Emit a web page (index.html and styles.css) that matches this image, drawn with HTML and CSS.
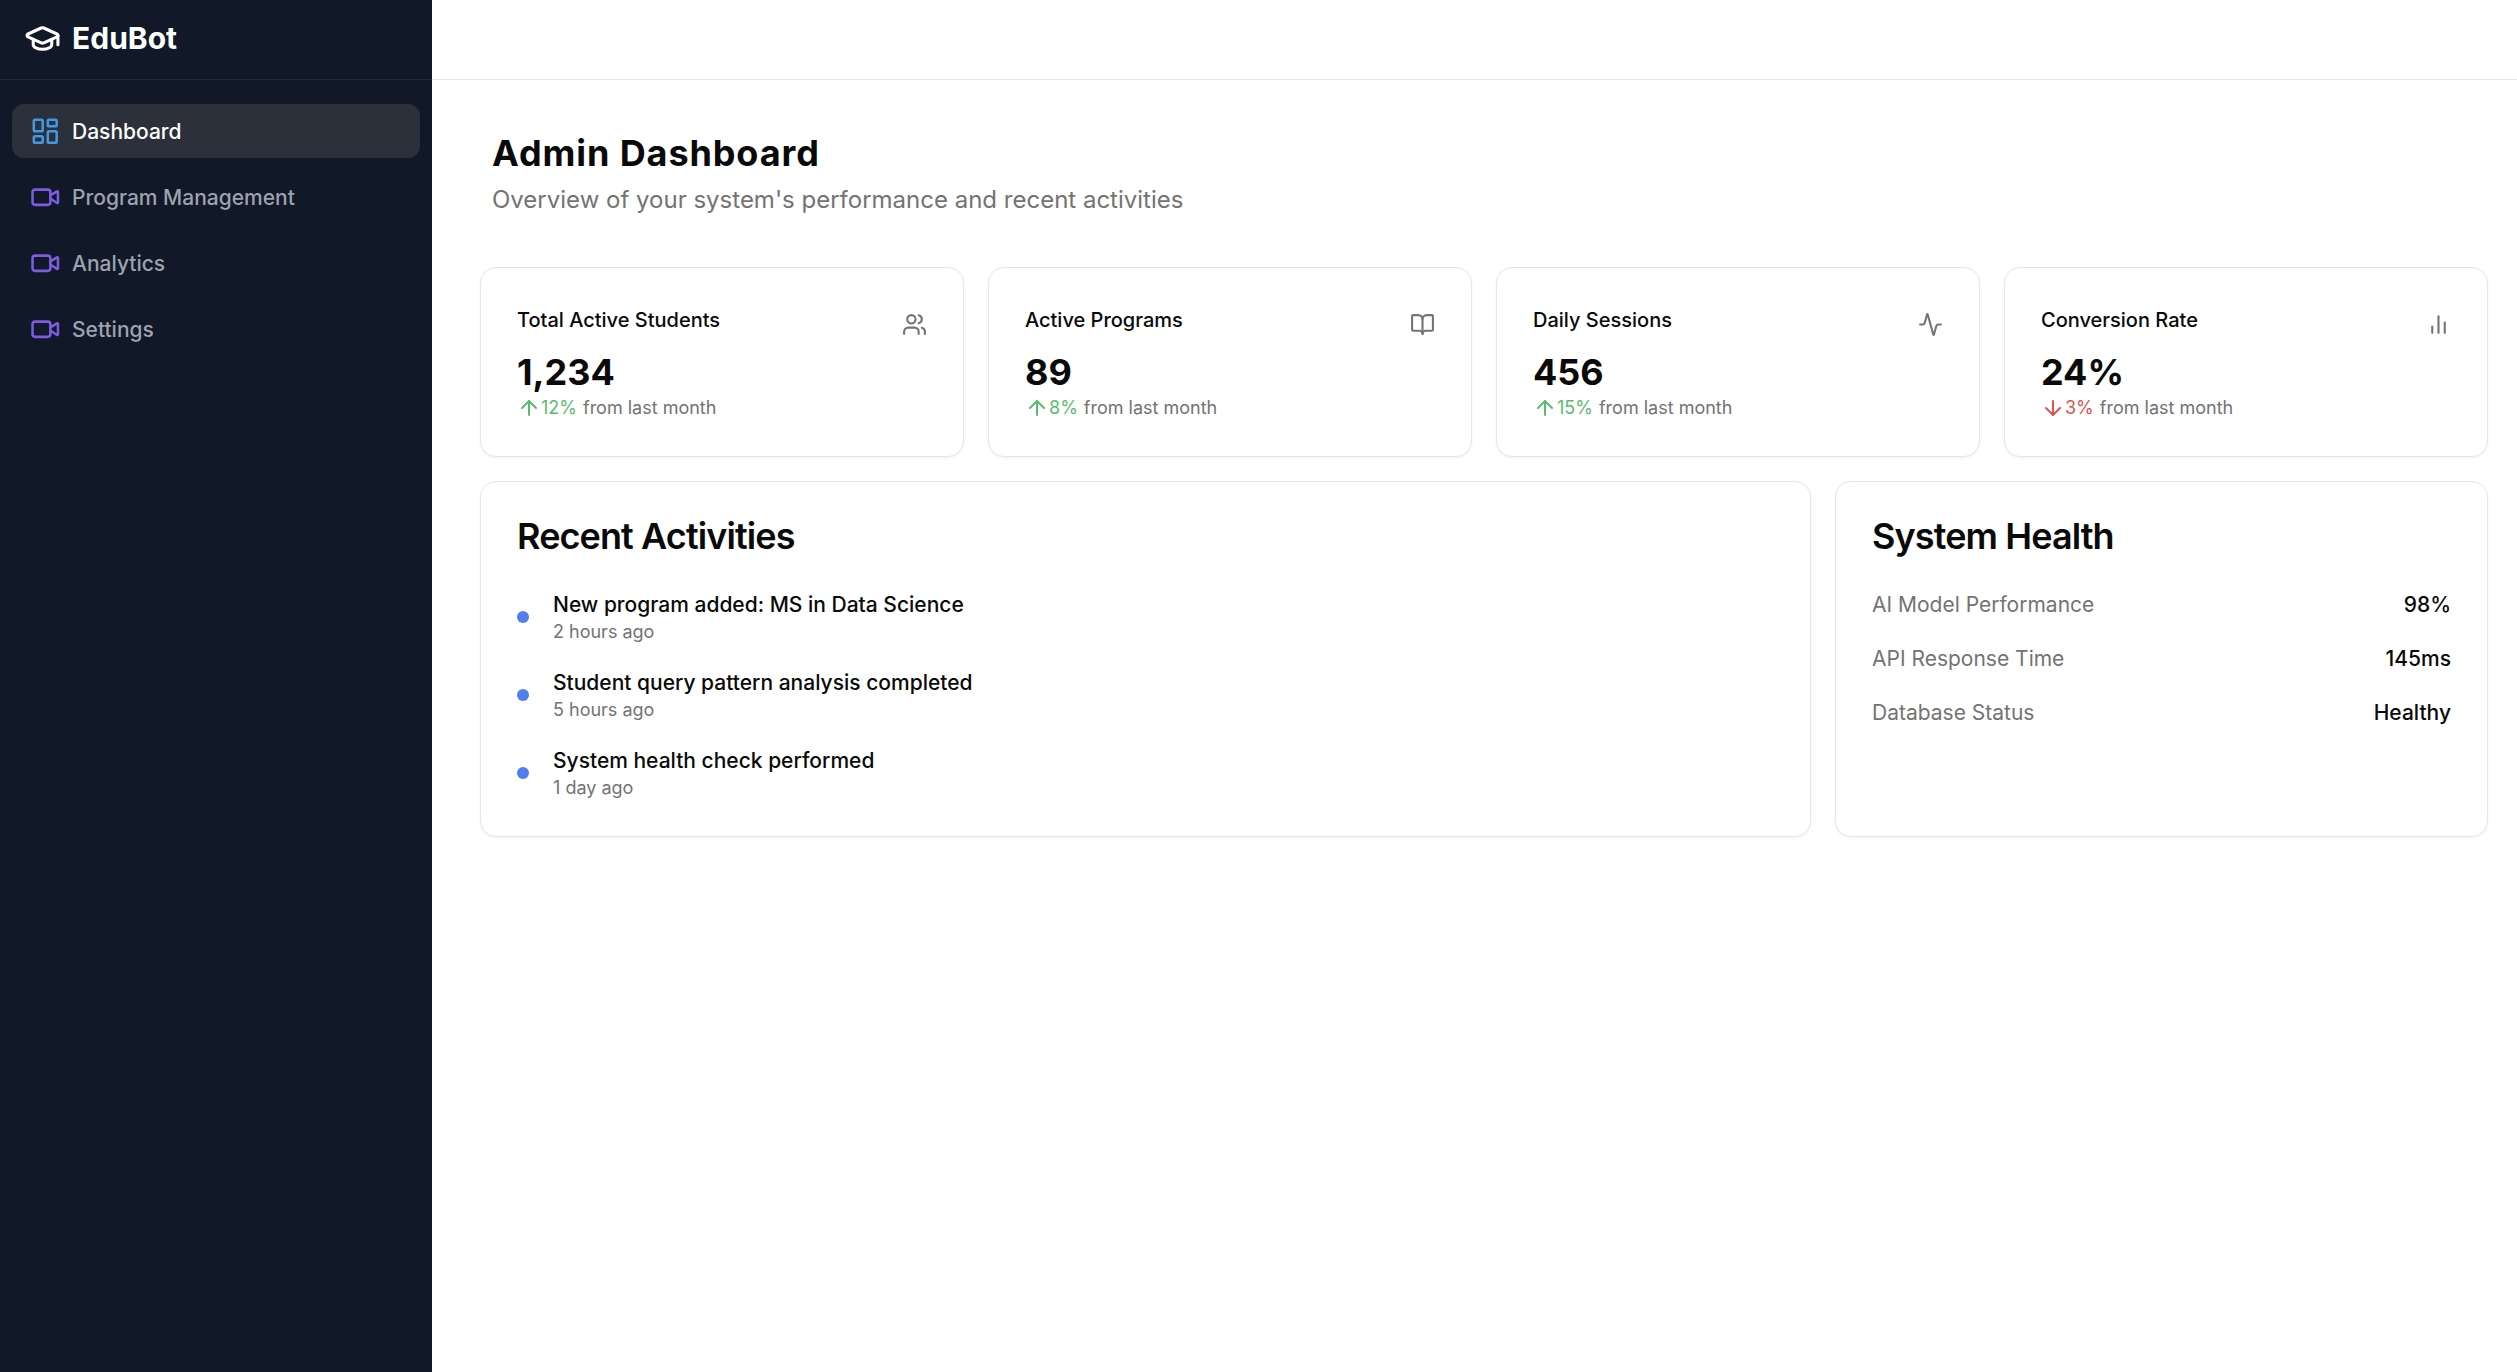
FILE: index.html

```html
<!DOCTYPE html>
<html>
<head>
  <meta charset="UTF-8">
  <title>EduBot Admin</title>
  <link rel="stylesheet" href="styles.css">
</head>
<body>

<aside class="sidebar">
  <div class="brand">
    <svg class="brand-icon" viewBox="0 0 24 24"><path d="M21.42 10.922a1 1 0 0 0-.019-1.838L12.83 5.18a2 2 0 0 0-1.66 0L2.6 9.08a1 1 0 0 0 0 1.832l8.57 3.908a2 2 0 0 0 1.66 0z"/><path d="M22 10v6"/><path d="M6 12.5V16a6 3 0 0 0 12 0v-3.5"/></svg>
    <span>EduBot</span>
  </div>
  <nav class="nav">
    <a class="nav-item active">
      <svg class="nav-icon blue" viewBox="0 0 24 24"><rect x="3" y="3" width="7" height="9" rx="1"/><rect x="14" y="3" width="7" height="5" rx="1"/><rect x="14" y="12" width="7" height="9" rx="1"/><rect x="3" y="16" width="7" height="5" rx="1"/></svg>
      Dashboard
    </a>
    <a class="nav-item">
      <svg class="nav-icon" viewBox="0 0 24 24"><path d="m16 13 5.223 3.482a.5.5 0 0 0 .777-.416V7.87a.5.5 0 0 0-.752-.432L16 10.5"/><rect x="2" y="6" width="14" height="12" rx="2"/></svg>
      Program Management
    </a>
    <a class="nav-item">
      <svg class="nav-icon" viewBox="0 0 24 24"><path d="m16 13 5.223 3.482a.5.5 0 0 0 .777-.416V7.87a.5.5 0 0 0-.752-.432L16 10.5"/><rect x="2" y="6" width="14" height="12" rx="2"/></svg>
      Analytics
    </a>
    <a class="nav-item">
      <svg class="nav-icon" viewBox="0 0 24 24"><path d="m16 13 5.223 3.482a.5.5 0 0 0 .777-.416V7.87a.5.5 0 0 0-.752-.432L16 10.5"/><rect x="2" y="6" width="14" height="12" rx="2"/></svg>
      Settings
    </a>
  </nav>
</aside>

<div class="page">
  <header class="topbar"></header>
  <main class="content">
    <div class="page-head">
      <h1>Admin Dashboard</h1>
      <p>Overview of your system's performance and recent activities</p>
    </div>

    <section class="stats">
      <div class="card stat">
        <div class="stat-top">
          <h3>Total Active Students</h3>
          <svg class="stat-icon" viewBox="0 0 24 24"><path d="M16 21v-2a4 4 0 0 0-4-4H6a4 4 0 0 0-4 4v2"/><circle cx="9" cy="7" r="4"/><path d="M22 21v-2a4 4 0 0 0-3-3.87"/><path d="M16 3.13a4 4 0 0 1 0 7.75"/></svg>
        </div>
        <div class="stat-value">1,234</div>
        <div class="stat-note">
          <svg class="arrow up" viewBox="0 0 24 24"><path d="M12 19V5"/><path d="m5 12 7-7 7 7"/></svg>
          <span class="pct up">12%</span> from last month
        </div>
      </div>
      <div class="card stat">
        <div class="stat-top">
          <h3>Active Programs</h3>
          <svg class="stat-icon" viewBox="0 0 24 24"><path d="M12 7v14"/><path d="M3 18a1 1 0 0 1-1-1V4a1 1 0 0 1 1-1h5a4 4 0 0 1 4 4 4 4 0 0 1 4-4h5a1 1 0 0 1 1 1v13a1 1 0 0 1-1 1h-6a3 3 0 0 0-3 3 3 3 0 0 0-3-3z"/></svg>
        </div>
        <div class="stat-value">89</div>
        <div class="stat-note">
          <svg class="arrow up" viewBox="0 0 24 24"><path d="M12 19V5"/><path d="m5 12 7-7 7 7"/></svg>
          <span class="pct up">8%</span> from last month
        </div>
      </div>
      <div class="card stat">
        <div class="stat-top">
          <h3>Daily Sessions</h3>
          <svg class="stat-icon" viewBox="0 0 24 24"><path d="M22 12h-2.48a2 2 0 0 0-1.93 1.46l-2.35 8.36a.25.25 0 0 1-.48 0L9.24 2.18a.25.25 0 0 0-.48 0l-2.35 8.36A2 2 0 0 1 4.49 12H2"/></svg>
        </div>
        <div class="stat-value">456</div>
        <div class="stat-note">
          <svg class="arrow up" viewBox="0 0 24 24"><path d="M12 19V5"/><path d="m5 12 7-7 7 7"/></svg>
          <span class="pct up">15%</span> from last month
        </div>
      </div>
      <div class="card stat">
        <div class="stat-top">
          <h3>Conversion Rate</h3>
          <svg class="stat-icon" viewBox="0 0 24 24"><path d="M18 20V10"/><path d="M12 20V4"/><path d="M6 20v-6"/></svg>
        </div>
        <div class="stat-value">24%</div>
        <div class="stat-note">
          <svg class="arrow down" viewBox="0 0 24 24"><path d="M12 5v14"/><path d="m19 12-7 7-7-7"/></svg>
          <span class="pct down">3%</span> from last month
        </div>
      </div>
    </section>

    <section class="panels">
      <div class="card panel">
        <h2>Recent Activities</h2>
        <ul class="activity">
          <li><i class="dot"></i><div><div class="activity-title">New program added: MS in Data Science</div><div class="activity-time">2 hours ago</div></div></li>
          <li><i class="dot"></i><div><div class="activity-title">Student query pattern analysis completed</div><div class="activity-time">5 hours ago</div></div></li>
          <li><i class="dot"></i><div><div class="activity-title">System health check performed</div><div class="activity-time">1 day ago</div></div></li>
        </ul>
      </div>
      <div class="card panel">
        <h2>System Health</h2>
        <div class="health">
          <div class="health-row"><span>AI Model Performance</span><b>98%</b></div>
          <div class="health-row"><span>API Response Time</span><b>145ms</b></div>
          <div class="health-row"><span>Database Status</span><b>Healthy</b></div>
        </div>
      </div>
    </section>
  </main>
</div>

</body>
</html>
```

FILE: styles.css

```css
* { box-sizing: border-box; }
html, body { height: 100%; }
body {
  margin: 0;
  display: flex;
  font-family: Inter, "Liberation Sans", sans-serif;
  color: #0a0a0a;
  background: #fff;
}
svg {
  fill: none;
  stroke: currentColor;
  stroke-width: 2;
  stroke-linecap: round;
  stroke-linejoin: round;
  flex: none;
}

/* sidebar */
.sidebar { width: 432px; flex: none; background: #111827; }
.brand {
  height: 80px;
  display: flex;
  align-items: center;
  gap: 11px;
  padding: 0 24px 3px;
  border-bottom: 1px solid #1f2937;
  color: #fff;
  font-size: 30px;
  font-weight: 700;
}
.brand-icon { width: 37px; height: 37px; }
.nav { display: flex; flex-direction: column; gap: 12px; padding: 24px 12px; }
.nav-item {
  height: 54px;
  display: flex;
  align-items: center;
  gap: 11.5px;
  padding: 0 18px;
  border-radius: 12px;
  color: #9ca3af;
  font-size: 21px;
  font-weight: 500;
}
.nav-item.active { background: #2b303b; color: #fff; }
.nav-icon { width: 30.5px; height: 30.5px; color: #7c5ce0; }
.nav-icon.blue { color: #4299e1; }

/* main */
.page { flex: 1; min-width: 0; }
.topbar { height: 80px; border-bottom: 1px solid #e5e7eb; }
.content { padding: 49px 29px 0 48px; }
.page-head { padding-left: 12px; margin-bottom: 49px; }
h1 { margin: 0; font-size: 36px; line-height: 48px; font-weight: 700; letter-spacing: 0.9px; }
.page-head p { margin: 5px 0 0; font-size: 24px; line-height: 36px; color: #737373; }

.card {
  background: #fff;
  border: 1px solid #e5e7eb;
  border-radius: 16px;
  box-shadow: 0 1px 3px rgba(0,0,0,0.06);
}
.stats { display: grid; grid-template-columns: repeat(4, 1fr); gap: 24px; }
.stat { height: 190px; padding: 36px 36px 0; }
.stat-top { display: flex; justify-content: space-between; align-items: flex-start; height: 34px; }
.stat-top h3 { margin: 0; font-size: 20px; line-height: 32px; font-weight: 500; }
.stat-icon { width: 25px; height: 25px; margin-top: 8px; color: #737373; }
.stat-value { font-size: 36px; line-height: 47px; font-weight: 700; margin-top: 11px; }
.stat-note {
  display: flex;
  align-items: center;
  font-size: 18px;
  line-height: 24px;
  color: #737373;
}
.arrow { width: 24px; height: 24px; }
.up { color: #5abb70; }
.down { color: #e05252; }
.pct { margin-right: 6px; }

.panels { display: grid; grid-template-columns: 1fr 653px; gap: 24px; margin-top: 24px; }
.panel { height: 356px; padding: 32px 36px 0; }
h2 { margin: 0; font-size: 36px; line-height: 44px; font-weight: 600; letter-spacing: -0.9px; }
.activity { list-style: none; margin: 32px 0 0; padding: 0; display: flex; flex-direction: column; gap: 24px; }
.activity li { display: flex; align-items: center; gap: 24px; }
.dot { width: 12px; height: 12px; border-radius: 50%; background: #4f7fee; flex: none; }
.activity-title { font-size: 21px; line-height: 29px; font-weight: 500; }
.activity-time { font-size: 18px; line-height: 25px; color: #737373; }
.health { margin-top: 31px; display: flex; flex-direction: column; gap: 22px; }
.health-row { display: flex; justify-content: space-between; font-size: 21px; line-height: 32px; color: #737373; }
.health-row b { font-weight: 500; color: #0a0a0a; }
```
